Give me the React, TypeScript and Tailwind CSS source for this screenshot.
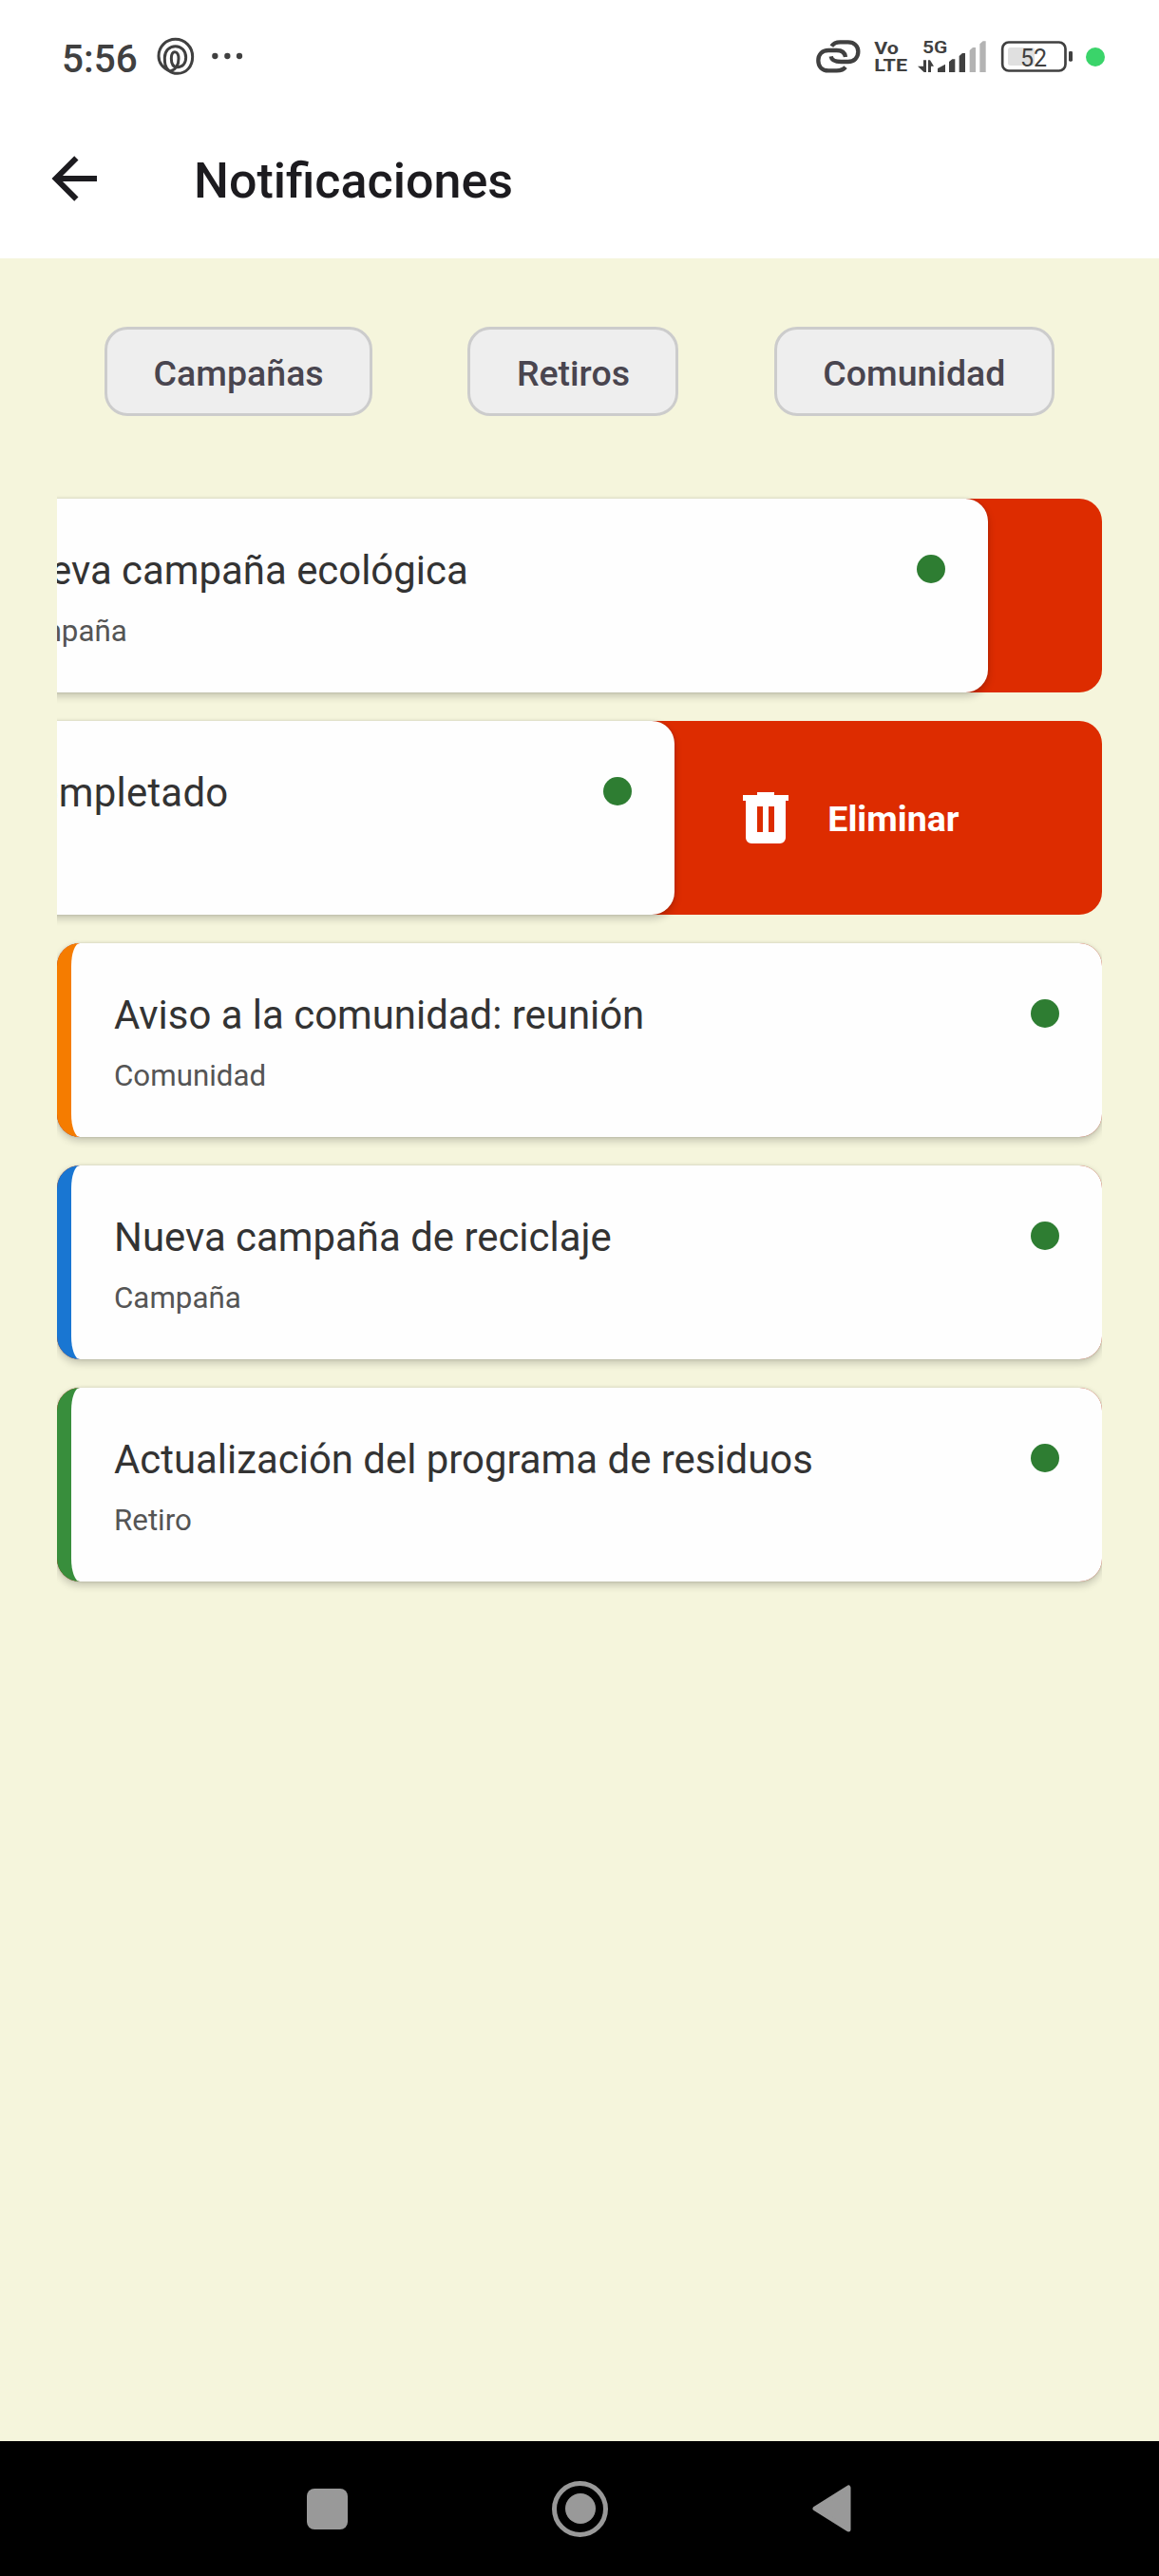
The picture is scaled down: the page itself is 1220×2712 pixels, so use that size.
type Notice = {
  title: string;
  kind: string;
  accent: string;
  offset: number;
  titleClass?: string;
};

const FILTERS = ["Campañas", "Retiros", "Comunidad"];

const NOTICES: Notice[] = [
  { title: "Nueva campaña ecológica", kind: "Campaña", accent: "border-[#1976d2]", offset: -120 },
  {
    title: "Retiro de residuos completado",
    kind: "Retiro",
    accent: "border-[#388e3c]",
    offset: -450,
    titleClass: "-ml-[6px] tracking-[0.25px]",
  },
  { title: "Aviso a la comunidad: reunión", kind: "Comunidad", accent: "border-[#f57c00]", offset: 0 },
  { title: "Nueva campaña de reciclaje", kind: "Campaña", accent: "border-[#1976d2]", offset: 0 },
  { title: "Actualización del programa de residuos", kind: "Retiro", accent: "border-[#388e3c]", offset: 0 },
];

function StatusBar() {
  return (
    <div className="flex h-[100px] items-start pt-5 text-[#404040]">
      <span className="ml-[65px] text-[40.5px] leading-[84px] font-medium">5:56</span>
      {/* Spiral app badge and overflow dots */}
      <svg className="ml-[19.5px] h-20 w-[42px]" viewBox="0 0 126 240" fill="none" stroke="currentColor" strokeWidth="9">
        <path d="M46 166C18 153 9 136 9 117C9 87 33 64 62 64C92 64 116 88 116 119C116 150 96 172 69 172C57 172 48 169 42 163C28 152 28 137 28 122C28 101 43 86 62 86C81 86 95 101 95 121C95 141 84 152 68 152C54 152 49 139 49 125C49 112 53 104 60 104C68 104 72 114 72 125C72 146 62 160 46 165" />
      </svg>
      <svg className="ml-[14.5px] h-20 w-10" viewBox="0 0 120 240" fill="currentColor">
        <circle cx="16" cy="117" r="9.5" />
        <circle cx="55" cy="117" r="9.5" />
        <circle cx="93" cy="117" r="9.5" />
      </svg>

      <div className="mr-[56px] ml-auto flex">
        <svg className="h-20 w-[72px]" viewBox="0 0 216 240" fill="none" stroke="currentColor" strokeWidth="13">
          <path d="M106 86C112 77 121 73 133 73H158C178 73 190 86 190 103C190 121 178 135 158 135H136C118 135 106 130 104 118" />
          <path d="M150 120C148 105 138 99 122 99H96C76 99 64 112 64 131C64 150 76 163 96 163H122C136 163 144 160 150 152" />
        </svg>
        <svg className="h-20 w-12" viewBox="216 0 144 240" fill="currentColor">
          <g className="font-[Roboto] text-[56px] font-bold">
            <text x="241" y="111" textLength="77" lengthAdjust="spacingAndGlyphs">Vo</text>
            <text x="241" y="165" textLength="104" lengthAdjust="spacingAndGlyphs">LTE</text>
          </g>
        </svg>
        <svg className="h-20 w-[90px]" viewBox="360 0 270 240" fill="currentColor">
          <text x="393" y="109" textLength="79" lengthAdjust="spacingAndGlyphs" className="font-[Roboto] text-[57px] font-semibold">5G</text>
          <path d="M396 130h9v38h-7l-20-19h18zM411 168v-38h6l12 19h-9v19z" />
          <path d="M441 168v-12l24-13v25zM477 168v-33l10-8h9v41zM509 168v-51l10-9h9v60z" />
          <path className="fill-[#b3b3b3]" d="M542 168v-69l10-9h9v78zM574 168v-89l10-9h9v98z" />
        </svg>
        <svg className="h-20 w-[114px]" viewBox="630 0 342 240" fill="none">
          <rect x="663" y="90" width="84" height="57" rx="8" className="fill-[#e0e0e0]" />
          <rect x="645.5" y="73.5" width="199" height="90" rx="20" stroke="currentColor" strokeWidth="8" />
          <rect x="855" y="102" width="12" height="32" rx="4" fill="currentColor" />
          <text x="702" y="150" fill="currentColor" className="font-[Roboto] text-[75px]">52</text>
          <circle cx="939" cy="120" r="30" className="fill-[#3ad46a]" />
        </svg>
      </div>
    </div>
  );
}

function NoticeRow({ title, kind, accent, offset, titleClass = "" }: Notice) {
  return (
    <div className="relative h-[204px] [clip-path:inset(-20px_0)]">
      <div className="absolute inset-0 flex items-center justify-end rounded-[24px] bg-[#dd2c00] pr-[150.5px] text-white">
        <svg className="size-[72px]" viewBox="0 0 24 24" fill="currentColor">
          <path d="M9,3V4H4V6H5V19A2,2 0 0,0 7,21H17A2,2 0 0,0 19,19V6H20V4H15V3H9M9,8H11V17H9V8M13,8H15V17H13V8Z" />
        </svg>
        <span className="mt-[3px] ml-[29px] text-[37.5px] leading-none font-bold">Eliminar</span>
      </div>
      <div
        className={`relative flex h-full justify-between rounded-[24px] border-l-[15px] bg-[#fefefe] pt-[45px] pr-[45px] pl-[45px] shadow-[0_4px_9px_rgba(0,0,0,0.2),0_0_3px_rgba(0,0,0,0.14)] ${accent}`}
        style={{ transform: `translateX(${offset}px)` }}
      >
        <div className="whitespace-nowrap">
          <p className={`text-[41.9px] leading-[61px] text-[#333333] ${titleClass}`}>{title}</p>
          <p className="mt-[11px] text-[31.3px] leading-[46px] text-[#555555]">{kind}</p>
        </div>
        <span className="mt-[14px] size-[30px] rounded-full bg-[#2e7d32]" />
      </div>
    </div>
  );
}

export default function App() {
  return (
    <div className="flex h-[2712px] w-[1220px] flex-col overflow-hidden bg-[#f5f5dc] font-[Roboto,sans-serif]">
      <header className="h-[272px] bg-white">
        <StatusBar />
        <div className="flex h-44 items-center pl-[42px] text-[#1c1b1f]">
          <svg className="size-[72px]" viewBox="0 0 24 24" fill="currentColor">
            <path d="M20,11V13H8L13.5,18.5L12.08,19.92L4.16,12L12.08,4.08L13.5,5.5L8,11H20Z" />
          </svg>
          <h1 className="mt-1.5 ml-[90px] text-[52px] leading-none font-medium">Notificaciones</h1>
        </div>
      </header>

      <main className="flex flex-1 flex-col px-[60px] pt-[72px]">
        <div className="flex justify-around">
          {FILTERS.map((label) => (
            <button
              key={label}
              className="h-[94px] rounded-[24px] border-[3px] border-[#cccccc] bg-[#eeeeee] px-[48.5px] pt-1.5 text-[37.5px] leading-none font-medium text-[#49454f]"
            >
              {label}
            </button>
          ))}
        </div>
        <div className="mt-[87px] flex flex-col gap-[30px]">
          {NOTICES.map((notice) => (
            <NoticeRow key={notice.title} {...notice} />
          ))}
        </div>
      </main>

      <nav className="flex h-[142px] items-center bg-black pl-[323px] text-[#999999]">
        <span className="size-[43px] rounded-[8px] bg-[#999999]" />
        <span className="ml-[215px] flex size-[59px] items-center justify-center rounded-full border-[5px] border-[#999999]">
          <span className="size-8 rounded-full bg-[#999999]" />
        </span>
        <svg className="ml-[215px] h-[50px] w-[41px]" viewBox="0 0 41 50" fill="currentColor" stroke="currentColor" strokeWidth="5" strokeLinejoin="round">
          <path d="M3 25L38 3V47Z" />
        </svg>
      </nav>
    </div>
  );
}
